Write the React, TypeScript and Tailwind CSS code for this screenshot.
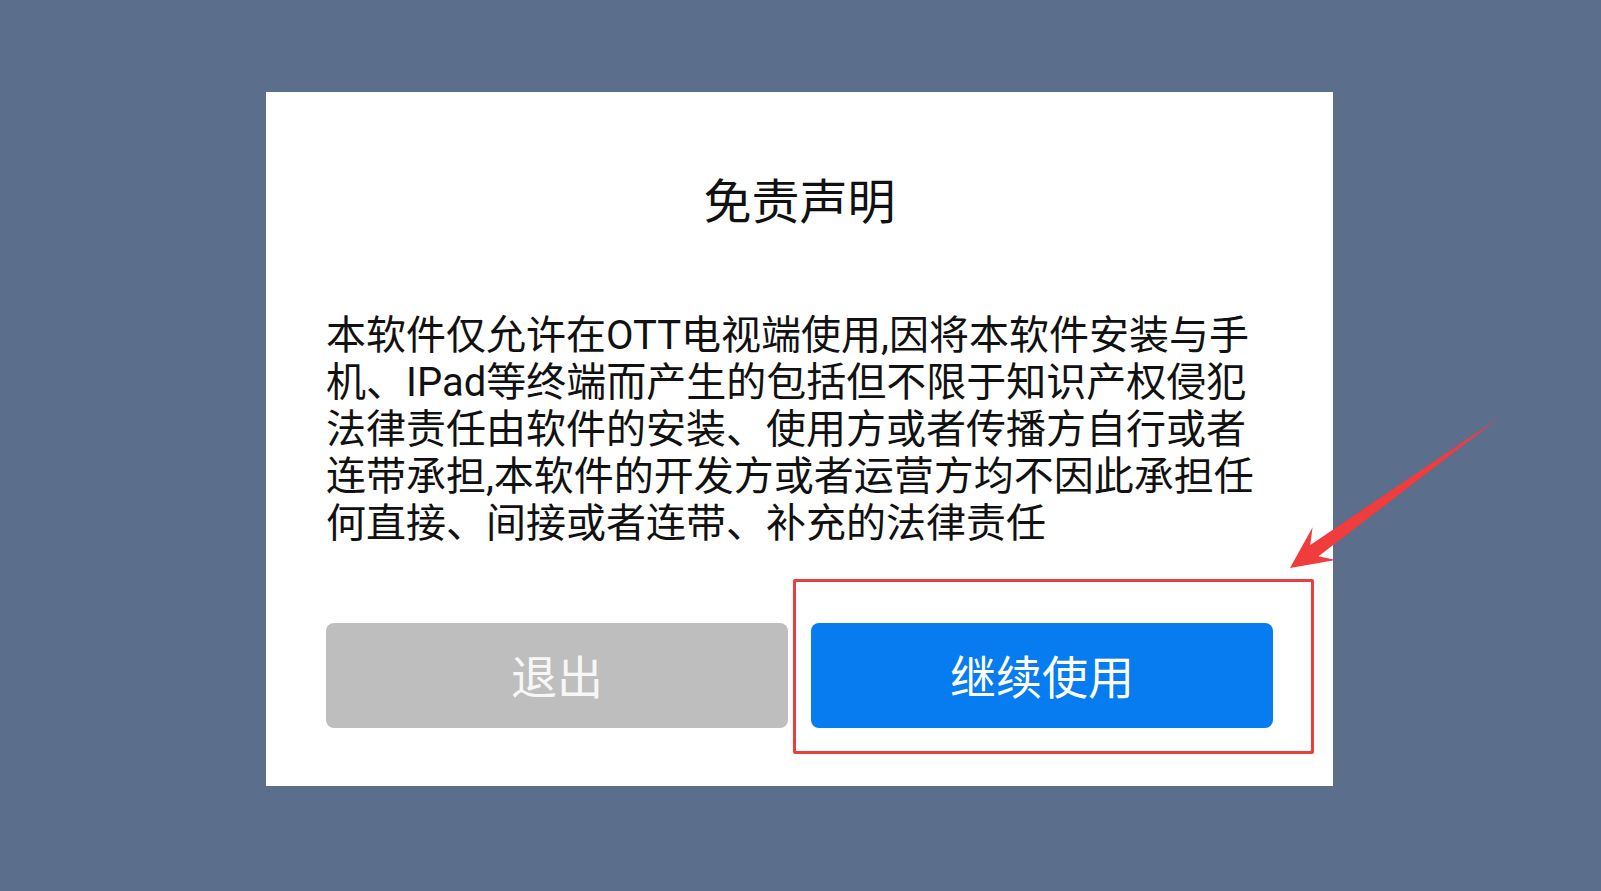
const fontStack = "font-['Roboto','Noto_Sans_CJK_SC',sans-serif]";

const Arrow = () => (
  <svg
    className="pointer-events-none absolute left-0 top-0"
    width="1601"
    height="891"
    viewBox="0 0 1601 891"
  >
    <polygon
      points="1500,417 1318.5,556.3 1335.8,559.9 1290,568 1312.6,527.3 1310.3,544.9"
      fill="#f03c3c"
    />
  </svg>
);

const App = () => {
  return (
    <div className={`relative h-[891px] w-full overflow-hidden bg-[#5b6e8b] pt-[92px] ${fontStack}`}>
      <div className="relative ml-[266px] flex h-[694px] w-[1067px] flex-col bg-white px-[60px] pt-[82px]">
        <h1 className="text-center text-[48px] leading-[58px] font-normal text-[#111]">免责声明</h1>

        <p className="mt-[80px] text-[40px] leading-[47px] text-[#111]">
          本软件仅允许在OTT电视端使用,因将本软件安装与手机、IPad等终端而产生的包括但不限于知识产权侵犯法律责任由软件的安装、使用方或者传播方自行或者连带承担,本软件的开发方或者运营方均不因此承担任何直接、间接或者连带、补充的法律责任
        </p>

        <div className="mt-auto mb-[58px] flex gap-[23px]">
          <button className="flex h-[105px] flex-1 items-center justify-center rounded-[8px] bg-[#bebebe] pt-[5px] text-[46px] text-[#f7f7f7]">
            退出
          </button>
          <button className="flex h-[105px] flex-1 items-center justify-center rounded-[8px] bg-[#067cf0] pt-[5px] text-[46px] text-white">
            继续使用
          </button>
        </div>

        {/* annotation box */}
        <div className="pointer-events-none absolute left-[527px] top-[487px] h-[175px] w-[521px] rounded-[2px] border-[3px] border-[#e8403f]" />
      </div>
      <Arrow />
    </div>
  );
};

export default App;
